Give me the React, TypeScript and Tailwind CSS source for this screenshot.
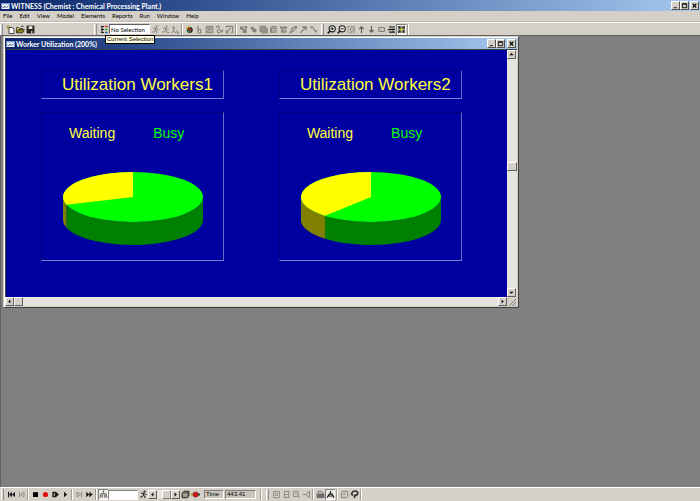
import type { ReactNode } from 'react';

const DIM = '#85837c';
const INK = '#1c1c1c';

export default function App() {
  return (
    <div className="flex h-screen flex-col overflow-hidden bg-[#d4d0c8] font-['Liberation_Sans',Arial,sans-serif] text-[6px] leading-[8px] text-black">
      <TitleBar title="WITNESS (Chemist : Chemical Processing Plant.)" />
      <MenuBar />
      <MainToolbar />

      {/* ── Workspace ── */}
      <main className="min-h-0 flex-1 border-t border-l border-[#606060] bg-[#808080] pl-[2px]">
        <ChartWindow />
      </main>

      <RunToolbar />
    </div>
  );
}

/* ── Title bar and window buttons ── */
function TitleBar({ title, inner = false }: { title: string; inner?: boolean }) {
  return (
    <header className="flex h-[11px] shrink-0 items-center gap-[1px] bg-linear-to-r from-[#0a246a] to-[#a6caf0] pr-[1px] pl-[1px]">
      <svg className="h-[8px] w-[9px] shrink-0" viewBox="0 0 9 8">
        <rect x="0.5" y="1" width="8" height="6" fill="#f4f6fa" />
        <path d="M.5 1h8v1.4h-8z" fill="#7fa0d8" />
        <path d="M1.3 4.5 2.5 6l1.4-2 1.3 1.6L7.6 4" fill="none" stroke="#24427f" strokeWidth=".8" />
      </svg>
      <h1 className="flex-1 font-[Lato,sans-serif] text-[7px] font-bold whitespace-nowrap text-white">{title}</h1>
      <div className="flex">
        <WindowButton label="Minimize">
          <path d="M2 6.5h3.5" />
        </WindowButton>
        <WindowButton label="Maximize">
          <path d="M1.5 2h5v4.5h-5zM1.5 2.5h5" />
        </WindowButton>
        <span className={inner ? 'w-[2px]' : 'w-[1px]'} />
        <WindowButton label="Close">
          <path d="m2 2 4 4.5M6 2 2 6.5" strokeWidth="1.3" />
        </WindowButton>
      </div>
    </header>
  );
}

function WindowButton({ label, children }: { label: string; children: ReactNode }) {
  return (
    <button
      aria-label={label}
      className="h-[9px] w-[9px] border border-t-white border-r-[#505050] border-b-[#505050] border-l-white bg-[#d4d0c8]"
    >
      <svg className="block h-full w-full" viewBox="0 0 8 8" fill="none" stroke="#000" strokeWidth="1">
        {children}
      </svg>
    </button>
  );
}

const MENUS = ['File', 'Edit', 'View', 'Model', 'Elements', 'Reports', 'Run', 'Window', 'Help'];

function MenuBar() {
  return (
    <nav className="flex h-[11px] shrink-0 items-center gap-[7px] border-b border-[#bdb9b1] pl-[3px] font-[Lato,sans-serif]">
      {MENUS.map((menu) => (
        <button key={menu}>{menu}</button>
      ))}
    </nav>
  );
}

/* ── Toolbar pieces ── */
function Tool({ label, pressed = false, children }: { label: string; pressed?: boolean; children: ReactNode }) {
  return (
    <button
      aria-label={label}
      className={`flex h-[11px] w-[10px] shrink-0 items-center justify-center ${
        pressed ? 'bg-[#ebe9e4] shadow-[inset_1px_1px_0_#808080,inset_-1px_-1px_0_#ffffff]' : ''
      }`}
    >
      <svg className="h-[9px] w-[9px]" viewBox="0 0 9 9" fill="none">
        {children}
      </svg>
    </button>
  );
}

function Divider() {
  return <span className="mx-[1px] h-[11px] w-[2px] shrink-0 border-r border-l border-r-white border-l-[#a09c94]" />;
}

function Grip() {
  return (
    <span className="mr-[2px] h-[11px] w-[3px] shrink-0 border-r border-l border-r-[#909090] border-l-white bg-[#d4d0c8]" />
  );
}

function Runner({ color = DIM }: { color?: string }) {
  return (
    <>
      <circle cx="5.6" cy="1.6" r="1" fill={color} />
      <path d="M2 3.4 5 3l-.8 2.4L6 6.2 5.6 8M4.2 5.4 3 7H1.2M5 3.4l1.4 1h1.2" stroke={color} strokeWidth="1" />
    </>
  );
}

function Magnifier({ plus = false }: { plus?: boolean }) {
  return (
    <>
      <circle cx="5.2" cy="3.8" r="3.1" stroke={INK} strokeWidth="1.1" fill="#eceae6" />
      <path d="M3 6 .8 8.4" stroke={INK} strokeWidth="1.6" />
      <path d={plus ? 'M3.6 3.8h3.2M5.2 2.2v3.2' : 'M3.6 3.8h3.2'} stroke={INK} strokeWidth="1" />
    </>
  );
}

/* ── Main toolbar ── */
function MainToolbar() {
  return (
    <div className="flex h-[13px] shrink-0 items-center border-t border-white">
      <div className="flex w-[94px] items-center">
        <Grip />
        <Tool label="New">
          <path d="M3 2.5h3L8 4v4.5H3z" fill="#fff" stroke={INK} strokeWidth=".8" />
          <path d="M.5.8 3.4 3.6M3.4.6.6 3.6M2 .2V4" stroke="#9a8d20" strokeWidth=".7" />
        </Tool>
        <Tool label="Open">
          <path d="M.6 7.8V2.6h2.2l.8.8h2.8v1.2" fill="#e6d95a" stroke={INK} strokeWidth=".8" />
          <path d="M.6 7.8 2.4 4.6h6L6.6 7.8z" fill="#948a16" stroke={INK} strokeWidth=".8" />
          <path d="M5 1.6C6 .6 7 .8 7.8 2" stroke={INK} strokeWidth=".7" />
        </Tool>
        <Tool label="Save">
          <path d="M1 1h7v7H1z" fill="#25251c" stroke={INK} strokeWidth=".8" />
          <path d="M2.6 1.2h3.8v2.8H2.6z" fill="#e8e6e0" />
          <path d="M5 6h1.4v2H5z" fill="#d4d0c8" />
        </Tool>
      </div>

      <div className="flex items-center">
        <Grip />
        <div className="relative flex items-center">
          <Tool label="Element tree">
            <path d="M1 1.5h3M1 4.5h3M1 7.5h3M2 1v7" stroke={INK} strokeWidth="1.1" />
            <path d="M5 1.5h2.6" stroke="#c22" strokeWidth="1.4" />
            <path d="M5 4.5h2.6" stroke="#2a2" strokeWidth="1.4" />
            <path d="M5 7.5h2.6" stroke="#26b" strokeWidth="1.4" />
          </Tool>
          <input
            aria-label="Current Selection"
            defaultValue="No Selection"
            className="h-[10px] w-[41px] border border-t-[#606060] border-r-white border-b-white border-l-[#606060] bg-white px-[1px] font-[Lato,sans-serif] text-[6px] outline-none"
          />
          {/* hint for the selection box */}
          <div
            role="tooltip"
            className="absolute top-[11px] left-[6px] z-10 border border-black bg-[#ffffe1] px-[1px] text-[6px] leading-[7px] whitespace-nowrap"
          >
            Current Selection
          </div>
        </div>
        <Tool label="Walk">
          <Runner />
        </Tool>
        <Tool label="Walk to">
          <Runner />
          <path d="M6.5 7.5h2" stroke={DIM} />
        </Tool>
        <Tool label="Walk off">
          <path d="M2.6 1v4L1 8M2.6 5l2 3M1.2 3h3M6 5v3h2.4" stroke={DIM} strokeWidth="1" />
        </Tool>
        <Divider />
        <Tool label="Display">
          <circle cx="4.8" cy="5" r="3" fill="#26352b" />
          <path d="M1 2.4 3 4M3.6.8 4.4 3" stroke="#d0a818" strokeWidth="1.1" />
          <circle cx="4.8" cy="4.8" r="1.3" fill="#d22b25" />
          <path d="M3 6.4h1.6" stroke="#27b257" strokeWidth="1.2" />
        </Tool>
        <Tool label="Pick">
          <path d="M3 1v7M3 4.5h2.6V8H3" stroke={DIM} strokeWidth="1.2" />
        </Tool>
        <Tool label="Detail">
          <path d="M1.2 1.4h6.6v6.4H1.2z" fill="#b3b0a8" stroke={DIM} strokeWidth="1" />
          <path d="M2.4 6.6 6.6 2.6M2.4 3.4h2" stroke={DIM} strokeWidth="1" />
        </Tool>
        <Tool label="Link">
          <path d="M1 2.4 3.4 1l1.4 2M3.2 3.6 6.8 7 8 4.6M2 5l1 2.6h2" stroke={DIM} strokeWidth="1.3" />
        </Tool>
        <Tool label="Unlink">
          <path d="M1.4 3V1.4h6.2v6H6M1.2 7.8 5.8 3M1.2 5v3h2.6" stroke={DIM} strokeWidth="1.1" />
        </Tool>
        <Divider />
        <Tool label="Group">
          <path d="M1 1.6h3.4v3H1zM3.6 4h4v4h-4zM5.6 1h2.6v2.6H5.6z" fill={DIM} />
        </Tool>
        <Tool label="Part">
          <path d="M1.2 2.6 4 1.4l1.4 2L8 4.6 6.8 7.4 4 7 3 5z" fill={DIM} />
        </Tool>
        <Tool label="Buffer">
          <path d="M1 1.4h5.4v4.8H1zM3 3.2h5.2V8H3z" fill="#aaa79f" stroke={DIM} strokeWidth="1.1" />
        </Tool>
        <Tool label="Machine">
          <path d="M1 2.4h6.6v5.4H1z" fill={DIM} />
          <path d="M2.4 2.2 3.4 1h3M3.4 4.2h2.8v2H3.4z" stroke="#d4d0c8" strokeWidth=".8" />
          <path d="M2.4 1.6h5.4" stroke={DIM} />
        </Tool>
        <Tool label="Conveyor">
          <path d="M1 1.6h7v2.2H1zM2 4.6h5.4v3.2H2z" fill={DIM} />
          <path d="m4.6 7 2-3" stroke="#d4d0c8" strokeWidth=".8" />
        </Tool>
        <Tool label="Edit">
          <path d="M1 7.8 2.4 5 6 1.6 7.4 3 4 6.6zM5 1.6h3M2 3h2" stroke={DIM} strokeWidth="1.1" />
        </Tool>
        <Tool label="Route">
          <path d="M1.4 7.8 6.8 2.4M3 2h4.2v3.6" stroke={DIM} strokeWidth="1.3" />
        </Tool>
        <Tool label="Track">
          <path d="M2 2.2h1.6L6 6.2h1.8M2 1.2v2M7.4 5v2.4" stroke={DIM} strokeWidth="1.2" />
        </Tool>
        <span className="w-[3px]" />
      </div>

      <div className="flex items-center">
        <Grip />
        <Tool label="Zoom in">
          <Magnifier plus />
        </Tool>
        <Tool label="Zoom out">
          <Magnifier />
        </Tool>
        <Tool label="Zoom area">
          <path d="M1 1.4h6.6v6.4H1z" stroke={DIM} strokeDasharray="1.4 .8" />
          <circle cx="5" cy="4.6" r="1.8" stroke={DIM} />
        </Tool>
        <Tool label="Up">
          <path d="M4.5 8V2M2.4 4l2.1-2.2L6.6 4" stroke="#5c5b56" strokeWidth="1.1" />
        </Tool>
        <Tool label="Down">
          <path d="M4.5 1v6M2.4 5l2.1 2.2L6.6 5" stroke="#5c5b56" strokeWidth="1.1" />
        </Tool>
        <Tool label="Fit">
          <rect x="1.6" y="2.6" width="6" height="3.8" rx="1" stroke={DIM} strokeWidth="1.1" />
        </Tool>
        <Tool label="Layers">
          <path d="M1 4.6h3M3 2h5M3.6 4.4H8M2 7.2h6.2" stroke={INK} strokeWidth="1.2" />
          <path d="M3 1v2.4M6 3.4v4" stroke={INK} strokeWidth=".8" />
        </Tool>
        <Tool label="Snap" pressed>
          <path d="M1.4 1.6h6.2v5.8H1.4z" fill="#8c8a84" stroke="#555" strokeWidth=".6" />
          <path d="m1.2 1.4 6.6 6.2M7.8 1.4 1.2 7.6" stroke={INK} strokeWidth="1.3" />
          <circle cx="4.6" cy="4.5" r="1.5" fill="#d9cf45" />
        </Tool>
        <Divider />
      </div>
    </div>
  );
}

/* ── Worker Utilization window ── */
function ChartWindow() {
  return (
    <section className="flex w-[74%] flex-col border border-t-[#d4d0c8] border-r-[#404040] border-b-[#404040] border-l-[#d4d0c8] bg-[#d4d0c8] p-[1px] shadow-[inset_1px_1px_0_#ffffff]">
      <TitleBar title="Worker Utilization (200%)" inner />
      <div className="flex border-t border-l border-[#404040]">
        <div className="grid flex-1 grid-cols-2 gap-[55px] bg-[#0000a0] pt-[20px] pr-[45px] pb-[36px] pl-[35px]">
          <UtilizationChart name="Utilization Workers1" waiting={30} />
          <UtilizationChart name="Utilization Workers2" waiting={38.6} />
        </div>
        <div className="flex w-[10px] flex-col bg-[#e6e4df]">
          <ScrollButton label="Scroll up" d="M1.6 4.8h4.8L4 2.4z" />
          <div className="flex flex-1 flex-col justify-center">
            <span className="mb-[14px] h-[9px] border border-t-white border-r-[#606060] border-b-[#606060] border-l-white bg-[#d4d0c8]" />
          </div>
          <ScrollButton label="Scroll down" d="M1.6 3h4.8L4 5.4z" />
        </div>
      </div>
      <div className="flex h-[9px] bg-[#e6e4df]">
        <ScrollButton label="Scroll left" d="M5 1.6v4.8L2.6 4z" />
        <span className="w-[9px] border border-t-white border-r-[#606060] border-b-[#606060] border-l-white bg-[#d4d0c8]" />
        <span className="flex-1" />
        <ScrollButton label="Scroll right" d="M3 1.6v4.8L5.4 4z" />
        <svg className="h-[9px] w-[10px] bg-[#d4d0c8]" viewBox="0 0 10 9" stroke="#808080">
          <path d="m2 9 7-7M5 9l4-4M8 9l1-1" />
        </svg>
      </div>
    </section>
  );
}

function ScrollButton({ label, d }: { label: string; d: string }) {
  return (
    <button
      aria-label={label}
      className="h-[9px] w-[9px] shrink-0 border border-t-white border-r-[#606060] border-b-[#606060] border-l-white bg-[#d4d0c8]"
    >
      <svg className="block h-full w-full" viewBox="0 0 8 8">
        <path d={d} fill="#000" />
      </svg>
    </button>
  );
}

function UtilizationChart({ name, waiting }: { name: string; waiting: number }) {
  const box = 'border border-t-[#000078] border-r-[#6a6ac8] border-b-[#8080d0] border-l-[#000078]';
  return (
    <div className="flex flex-col gap-[13px]">
      <h2 className={`${box} py-[3px] pl-[20px] text-[17px] leading-[21px] whitespace-nowrap text-[#ffff40]`}>{name}</h2>
      <div className={`${box} pt-[10px] pb-[13px]`}>
        <div className="flex gap-[38px] pl-[27px] text-[14px] leading-[20px]">
          <span className="text-[#ffff40]">Waiting</span>
          <span className="text-[#00ff00]">Busy</span>
        </div>
        <Pie waiting={waiting} />
      </div>
    </div>
  );
}

/** Raised pie, waiting share runs counter-clockwise from the top. */
function Pie({ waiting }: { waiting: number }) {
  const cx = 71;
  const cy = 26;
  const rx = 70;
  const ry = 25;
  const depth = 23;
  const angle = (waiting / 100) * 2 * Math.PI;
  const x = cx - rx * Math.sin(angle);
  const y = cy - ry * Math.cos(angle);

  return (
    <svg
      className="mt-[28px] ml-[20px] block h-[76px] w-[142px]"
      viewBox="0 0 142 76"
      role="img"
      aria-label={`Waiting ${waiting}%`}
    >
      <path
        fill="#008000"
        d={`M${x} ${y}A${rx} ${ry} 0 0 0 ${cx + rx} ${cy}v${depth}A${rx} ${ry} 0 0 1 ${x} ${y + depth}z`}
      />
      <path
        fill="#808000"
        d={`M${cx - rx} ${cy}A${rx} ${ry} 0 0 0 ${x} ${y}v${depth}A${rx} ${ry} 0 0 1 ${cx - rx} ${cy + depth}z`}
      />
      <ellipse cx={cx} cy={cy} rx={rx} ry={ry} fill="#00ff00" />
      <path fill="#ffff00" d={`M${cx} ${cy}V${cy - ry}A${rx} ${ry} 0 0 0 ${x} ${y}z`} />
    </svg>
  );
}

/* ── Run toolbar ── */
function RunToolbar() {
  const field =
    'h-[9px] border border-t-[#808080] border-r-white border-b-white border-l-[#808080] bg-[#c8c4bc] pl-[1px] text-[6px] leading-[7px]';
  return (
    <footer className="flex h-[14px] shrink-0 items-center border-t border-white pl-[1px]">
      <Grip />
      <Tool label="Rewind">
        <path d="M1 1.8h1.2v5.4H1zM5 1.8v5.4L2.2 4.5zM8 1.8v5.4L5 4.5z" fill={INK} />
      </Tool>
      <Tool label="Step back">
        <path d="M2.4 1.8v5.4M7 2v5L3.6 4.5z" stroke={DIM} strokeWidth=".9" />
      </Tool>
      <Divider />
      <Tool label="Stop">
        <path d="M2 2.2h5v4.8H2z" fill="#000" />
      </Tool>
      <Tool label="Record">
        <circle cx="4.5" cy="4.5" r="2.6" fill="#e01010" />
      </Tool>
      <Tool label="Batch">
        <path d="M1.4 1.8H5L8 4.5 5 7.2H1.4z" fill={INK} />
        <path d="M3.4 3v3" stroke="#d4d0c8" strokeWidth=".8" />
      </Tool>
      <Tool label="Play">
        <path d="M3 1.8v5.4l3.2-2.7z" fill={INK} />
      </Tool>
      <Divider />
      <Tool label="Step forward">
        <path d="M6.6 1.8v5.4M2 2v5l3.4-2.5z" stroke={DIM} strokeWidth=".9" />
      </Tool>
      <Tool label="Fast forward">
        <path d="M1.2 1.8v5.4L4.4 4.5zM4.4 1.8v5.4l3.4-2.7z" fill={INK} />
      </Tool>
      <Divider />
      <Tool label="Clock" pressed>
        <path d="M4.5.6v2M1 7.6l1.2-3.8h4.6L8 7.6M3.2 7.6V5M5.8 7.6V5" stroke="#4c4c48" strokeWidth="1" />
      </Tool>
      <input
        aria-label="Run until"
        className="h-[10px] w-[30px] border border-t-[#808080] border-r-white border-b-white border-l-[#808080] bg-white outline-none"
      />
      <Tool label="Run speed">
        <Runner color={INK} />
      </Tool>
      <div className="flex w-[32px] items-center justify-between bg-[#e6e4df]">
        <ScrollButton label="Slower" d="M5 1.6v4.8L2.6 4z" />
        <span className="ml-[5px] h-[9px] w-[9px] border border-t-white border-r-[#808080] border-b-[#808080] border-l-white bg-[#d4d0c8]" />
        <ScrollButton label="Faster" d="M3 1.6v4.8L5.4 4z" />
      </div>
      <Tool label="Report">
        <path d="M1 3.4 3 1.2h5v4.4L6.4 7.8H1z" fill="#6f6d5c" stroke={INK} strokeWidth=".8" />
        <path d="M2 4.4h4M2 6h4" stroke="#d9d6b8" strokeWidth=".8" />
      </Tool>
      <Tool label="Breakpoint">
        <path d="M0 4.5h2" stroke="#b09a10" strokeWidth="1.8" />
        <path d="M7 4.5h2" stroke="#185c28" strokeWidth="1.8" />
        <circle cx="4.6" cy="4.5" r="2.6" fill="#d01818" stroke="#501010" strokeWidth=".5" />
      </Tool>
      <div className="ml-[4px] flex gap-[1px]">
        <span className={`${field} w-[20px]`}>Time</span>
        <output className={`${field} w-[31px]`}>443.41</output>
      </div>
      <span className="w-[3px]" />
      <Divider />
      <span className="w-[3px]" />
      <Grip />
      <Tool label="Table">
        <path d="M1.6 1.4h5.8v6.4H1.6zM3 3.4h3M3 5.4h3" stroke={DIM} strokeWidth=".9" />
      </Tool>
      <Tool label="List">
        <path d="M2 1.4h5M3 4.4h4M2 7.6h5M2.4 1v7M6.8 1v7" stroke={DIM} strokeWidth=".9" />
      </Tool>
      <Tool label="Find">
        <path d="M1.4 1.4h4.8v5H1.4zM5.4 5.4 8 8M3 3.4h2" stroke={DIM} strokeWidth=".9" />
      </Tool>
      <Tool label="Flow">
        <path d="M1 4.5h3M7 1.4 4 4.5l3 3.1M7.4 1v7" stroke={DIM} strokeWidth="1" />
      </Tool>
      <Divider />
      <Tool label="Print">
        <path d="M1 4h7v3.6H1z" fill="#777" stroke="#555" strokeWidth=".7" />
        <path d="M2 4V1.6h4L7 4M2.4 6h4" stroke="#666" strokeWidth=".8" />
      </Tool>
      <Tool label="Animate" pressed>
        <path d="M4.5 1v3M1.2 7.6l2-3.4h3L8 7.6M3 6h3.6" stroke={INK} strokeWidth="1.2" />
      </Tool>
      <Divider />
      <Tool label="Notes">
        <path d="M1.4 2.4 3 1.4h4.8v4.8L6.4 7.4h-5zM3 4h3" stroke={DIM} strokeWidth="1" />
      </Tool>
      <Tool label="Help">
        <path d="M2 5.4V2.6L3.6 1.2h3L8 2.8 7 5H5l-.4 3" stroke={INK} strokeWidth="1.3" />
        <path d="m1 3.6 2.4 2.8" stroke={INK} strokeWidth=".9" />
      </Tool>
      <Divider />
    </footer>
  );
}
